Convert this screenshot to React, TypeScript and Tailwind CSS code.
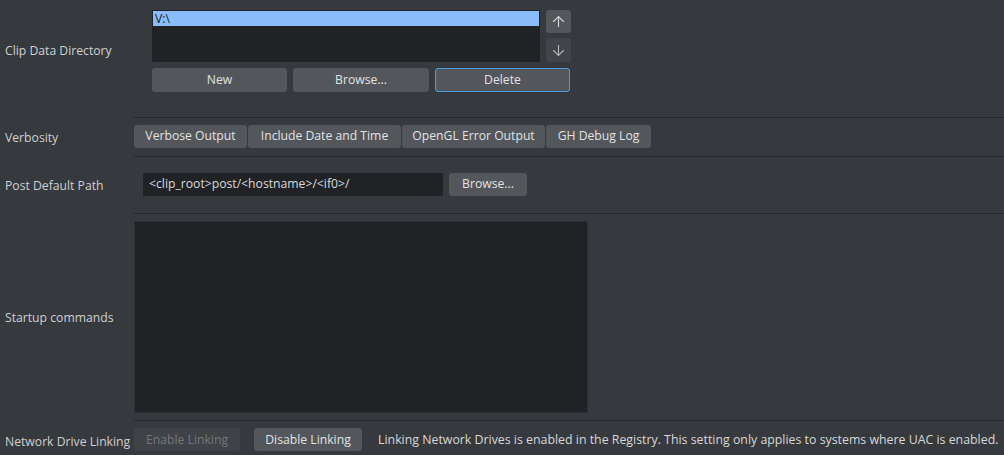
import { ArrowUp, ArrowDown } from 'lucide-react'

const btn = 'h-[23px] rounded-[3px] bg-[#53565b] text-[#e2e2e2] text-[12.2px] flex items-center justify-center'

function Row({
  label,
  children,
  className,
  labelClass,
}: {
  label: string
  children: React.ReactNode
  className?: string
  labelClass?: string
}) {
  return (
    <div className="flex">
      <div className={`w-[134px] shrink-0 flex pl-[5px] text-[12.2px] text-[#d0d0d0] ${labelClass ?? 'items-center pt-px'}`}>
        {label}
      </div>
      <div className={`flex-1 ${className ?? ''}`}>{children}</div>
    </div>
  )
}

export default function App() {
  return (
    <div className="w-[1004px] h-[455px] overflow-hidden bg-[#36393e] font-['Open_Sans',sans-serif]">
      {/* Clip data directory */}
      <Row
        label="Clip Data Directory"
        labelClass="items-start pt-[42px]"
        className="h-[118px] border-b border-[#27292d] pl-[18px] pt-[10px]"
      >
        <div className="flex gap-[6px]">
          <div className="w-[388px] h-[52px] bg-[#202226] pt-px">
            <div className="mx-px h-[15px] bg-[#8bbcfa] text-[12.2px] leading-[15px] text-[#1a1c20] pl-[2px]">V:\</div>
          </div>
          <div className="flex flex-col gap-[5px]">
            <div className="w-[25px] h-[23px] rounded-[3px] bg-[#53565b] flex items-center justify-center">
              <ArrowUp size={17} strokeWidth={1.6} className="text-[#d6d6d6]" />
            </div>
            <div className="w-[25px] h-[24px] rounded-[3px] bg-[#414449] flex items-center justify-center">
              <ArrowDown size={17} strokeWidth={1.6} className="text-[#b8b8b8]" />
            </div>
          </div>
        </div>
        <div className="flex gap-[6px] mt-[6px]">
          <div className={`${btn} w-[135px] h-[24px]`}>New</div>
          <div className={`${btn} w-[136px] h-[24px]`}>Browse...</div>
          <div className={`${btn} w-[135px] h-[24px] border border-[#4a9ee0]`}>Delete</div>
        </div>
      </Row>

      {/* Verbosity */}
      <Row label="Verbosity" className="h-[39px] border-b border-[#27292d] pt-[7px]">
        <div className="flex gap-px">
          <div className={`${btn} w-[113px]`}>Verbose Output</div>
          <div className={`${btn} w-[153px]`}>Include Date and Time</div>
          <div className={`${btn} w-[143px]`}>OpenGL Error Output</div>
          <div className={`${btn} w-[105px]`}>GH Debug Log</div>
        </div>
      </Row>

      {/* Post default path */}
      <Row label="Post Default Path" className="h-[57px] border-b border-[#27292d] pt-[16px] pl-[9px]">
        <div className="flex gap-[6px]">
          <div className="w-[300px] h-[23px] bg-[#202226] text-[12.2px] text-[#dadada] flex items-center pl-[6px]">
            &lt;clip_root&gt;post/&lt;hostname&gt;/&lt;if0&gt;/
          </div>
          <div className={`${btn} w-[78px]`}>Browse...</div>
        </div>
      </Row>

      {/* Startup commands */}
      <Row label="Startup commands" className="h-[207px] border-b border-[#27292d] pt-[7px]">
        <div className="w-[454px] h-[192px] bg-[#202226] border border-[#2c2f33]" />
      </Row>

      {/* Network drive linking */}
      <Row label="Network Drive Linking" labelClass="items-start pt-[12px]" className="h-[34px] pt-[7px]">
        <div className="flex items-center">
          <div className="w-[106px] h-[23px] rounded-[3px] bg-[#3f4247] text-[#74777b] text-[12.2px] flex items-center justify-center pt-[2px]">
            Enable Linking
          </div>
          <div className={`${btn} w-[108px] ml-[14px] pt-[2px]`}>Disable Linking</div>
          <span className="ml-[16px] pt-[2px] text-[12.35px] text-[#d8d8d8] whitespace-nowrap">
            Linking Network Drives is enabled in the Registry. This setting only applies to systems where UAC is enabled.
          </span>
        </div>
      </Row>
    </div>
  )
}
